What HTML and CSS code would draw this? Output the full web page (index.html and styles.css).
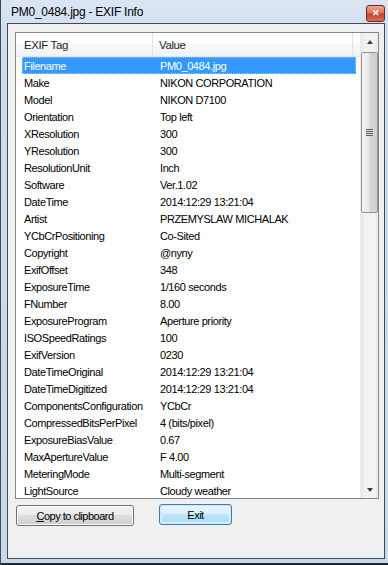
FILE: index.html
```html
<!DOCTYPE html>
<html lang="en">
<head>
    <meta charset="UTF-8">
    <title>PM0_0484.jpg - EXIF Info</title>
    <link rel="stylesheet" href="styles.css">
</head>
<body>
    <div class="window">
        <div class="titlebar">
            <span class="title">PM0_0484.jpg - EXIF Info</span>
            <span class="close">&#x2715;</span>
        </div>

        <div class="client">
            <div class="listview">
                <div class="lv-main">
                    <div class="lv-header">
                        <div class="col col-tag">EXIF Tag</div>
                        <div class="col col-value">Value</div>
                    </div>
                    <div class="rows" id="rows"></div>
                </div>
                <div class="scrollbar">
                    <div class="sb-btn"><span class="arrow-up"></span></div>
                    <div class="sb-track">
                        <div class="sb-thumb"><span class="grip"></span></div>
                    </div>
                    <div class="sb-btn"><span class="arrow-down"></span></div>
                </div>
            </div>

            <div class="buttons">
                <button class="btn btn-copy"><u>C</u>opy to clipboard</button>
                <button class="btn btn-exit">Exit</button>
            </div>
        </div>
        <div class="frame-bottom"></div>
    </div>

    <script>
        var exif = [
            ["Filename", "PM0_0484.jpg"],
            ["Make", "NIKON CORPORATION"],
            ["Model", "NIKON D7100"],
            ["Orientation", "Top left"],
            ["XResolution", "300"],
            ["YResolution", "300"],
            ["ResolutionUnit", "Inch"],
            ["Software", "Ver.1.02"],
            ["DateTime", "2014:12:29 13:21:04"],
            ["Artist", "PRZEMYSLAW MICHALAK"],
            ["YCbCrPositioning", "Co-Sited"],
            ["Copyright", "@nyny"],
            ["ExifOffset", "348"],
            ["ExposureTime", "1/160 seconds"],
            ["FNumber", "8.00"],
            ["ExposureProgram", "Aperture priority"],
            ["ISOSpeedRatings", "100"],
            ["ExifVersion", "0230"],
            ["DateTimeOriginal", "2014:12:29 13:21:04"],
            ["DateTimeDigitized", "2014:12:29 13:21:04"],
            ["ComponentsConfiguration", "YCbCr"],
            ["CompressedBitsPerPixel", "4 (bits/pixel)"],
            ["ExposureBiasValue", "0.67"],
            ["MaxApertureValue", "F 4.00"],
            ["MeteringMode", "Multi-segment"],
            ["LightSource", "Cloudy weather"]
        ];

        var rows = document.getElementById("rows");
        exif.forEach(function (item, i) {
            var row = document.createElement("div");
            row.className = i === 0 ? "row selected" : "row";
            row.innerHTML = '<span class="cell cell-tag"></span><span class="cell cell-value"></span>';
            row.children[0].textContent = item[0];
            row.children[1].textContent = item[1];
            rows.appendChild(row);
        });
    </script>
</body>
</html>
```

FILE: styles.css
```css
body {
    margin: 0;
    background-color: #1e2731;
    font-family: "Liberation Sans", Arial, sans-serif;
}

.window {
    width: 388px;
    height: 565px;
    display: flex;
    flex-direction: column;
    background: linear-gradient(to bottom, #dbe6f2, #cfdded 40px, #c9d8e9);
    border-left: 1px solid #3d4a58;
    box-sizing: border-box;
    overflow: hidden;
}

.titlebar {
    height: 23px;
    display: flex;
    align-items: center;
    padding-left: 10px;
    padding-right: 3px;
    flex-shrink: 0;
}
.title {
    font-size: 12px;
    letter-spacing: -0.25px;
    color: #000;
    padding-top: 1px;
}
.close {
    margin-left: auto;
    width: 17px;
    height: 15px;
    margin-top: 3px;
    border: 1px solid #6b2a22;
    border-radius: 3px;
    background: linear-gradient(to bottom, #eba58f, #d9735c 45%, #c7432b 55%, #da6f55);
    color: #fff;
    font-size: 9px;
    font-weight: bold;
    line-height: 15px;
    text-align: center;
    box-sizing: content-box;
}

.client {
    margin: 0 3px 0 6px;
    border: 1px solid #414b57;
    background-color: #f0f0f0;
    height: 534px;
    display: flex;
    flex-direction: column;
    flex-shrink: 0;
}

.listview {
    margin: 8px 5px 0 7px;
    height: 465px;
    border: 1px solid #828790;
    background-color: #fff;
    display: flex;
    flex-shrink: 0;
    overflow: hidden;
}
.lv-main {
    flex: 1;
    overflow: hidden;
}
.lv-header {
    height: 23px;
    display: flex;
    background: linear-gradient(to bottom, #ffffff, #ffffff 50%, #f7f8fa 50%, #f1f2f4);
    border-bottom: 1px solid #e2e3e5;
    font-size: 11.5px;
    letter-spacing: -0.4px;
    color: #1e1e1e;
}
.col {
    display: flex;
    align-items: center;
    padding-left: 8px;
    border-right: 1px solid #e3e4e6;
}
.col-tag {
    width: 128px;
}
.col-value {
    width: 193px;
    padding-left: 6px;
}

.rows {
    padding-left: 6px;
    font-size: 11px;
    letter-spacing: -0.4px;
    color: #000;
}
.row {
    height: 17px;
    width: 334px;
    display: flex;
    align-items: center;
    box-sizing: border-box;
}
.row.selected {
    background-color: #3399ff;
    color: #fff;
    outline: 1px dotted #9cc9f5;
    outline-offset: -1px;
}
.cell-tag {
    width: 136px;
    padding-left: 2px;
    box-sizing: border-box;
}
.cell-value {
    padding-left: 2px;
}

.scrollbar {
    width: 17px;
    display: flex;
    flex-direction: column;
    background: linear-gradient(to right, #e6e6e6, #f2f2f2 20%, #f2f2f2 80%, #e9e9e9);
    border-left: 1px solid #ededed;
}
.sb-btn {
    height: 17px;
    display: flex;
    align-items: center;
    justify-content: center;
    flex-shrink: 0;
}
.arrow-up, .arrow-down {
    width: 0;
    height: 0;
    border-left: 3.5px solid transparent;
    border-right: 3.5px solid transparent;
}
.arrow-up {
    border-bottom: 4px solid #404040;
}
.arrow-down {
    border-top: 4px solid #404040;
}
.sb-track {
    flex: 1;
    padding-top: 2px;
}
.sb-thumb {
    height: 161px;
    border: 1px solid #959595;
    border-radius: 2px;
    background: linear-gradient(to right, #f4f4f4, #e8e8e8 45%, #d6d6d6 55%, #cfcfcf);
    display: flex;
    align-items: center;
    justify-content: center;
    box-sizing: border-box;
}
.grip {
    width: 7px;
    height: 7px;
    background: repeating-linear-gradient(to bottom, #5f5f5f 0, #5f5f5f 1px, #d8d8d8 1px, #d8d8d8 2px);
}

.buttons {
    display: flex;
    align-items: flex-start;
    gap: 25px;
    padding: 5px 0 0 8px;
}
.btn {
    height: 21px;
    font-family: "Liberation Sans", Arial, sans-serif;
    font-size: 11px;
    letter-spacing: -0.5px;
    color: #000;
    border: 1px solid #707070;
    border-radius: 3px;
    background: linear-gradient(to bottom, #f2f2f2, #ebebeb 50%, #dddddd 50%, #cfcfcf);
    box-shadow: inset 0 0 0 1px #fbfbfb;
    padding: 0;
}
.btn-copy {
    width: 118px;
    margin-top: 1px;
}
.btn-exit {
    width: 73px;
    border-color: #3c7fb1;
    background: linear-gradient(to bottom, #eaf6fd, #d9f0fc 50%, #bee6fd 50%, #a7d9f5);
    box-shadow: inset 0 0 0 1px #c7e9fb, inset 0 0 1px 2px #e2f3fc;
}

.frame-bottom {
    flex: 1;
    background: linear-gradient(to bottom, #c9d8e9 0, #c9d8e9 4px, #1d2834 4px);
}
```
